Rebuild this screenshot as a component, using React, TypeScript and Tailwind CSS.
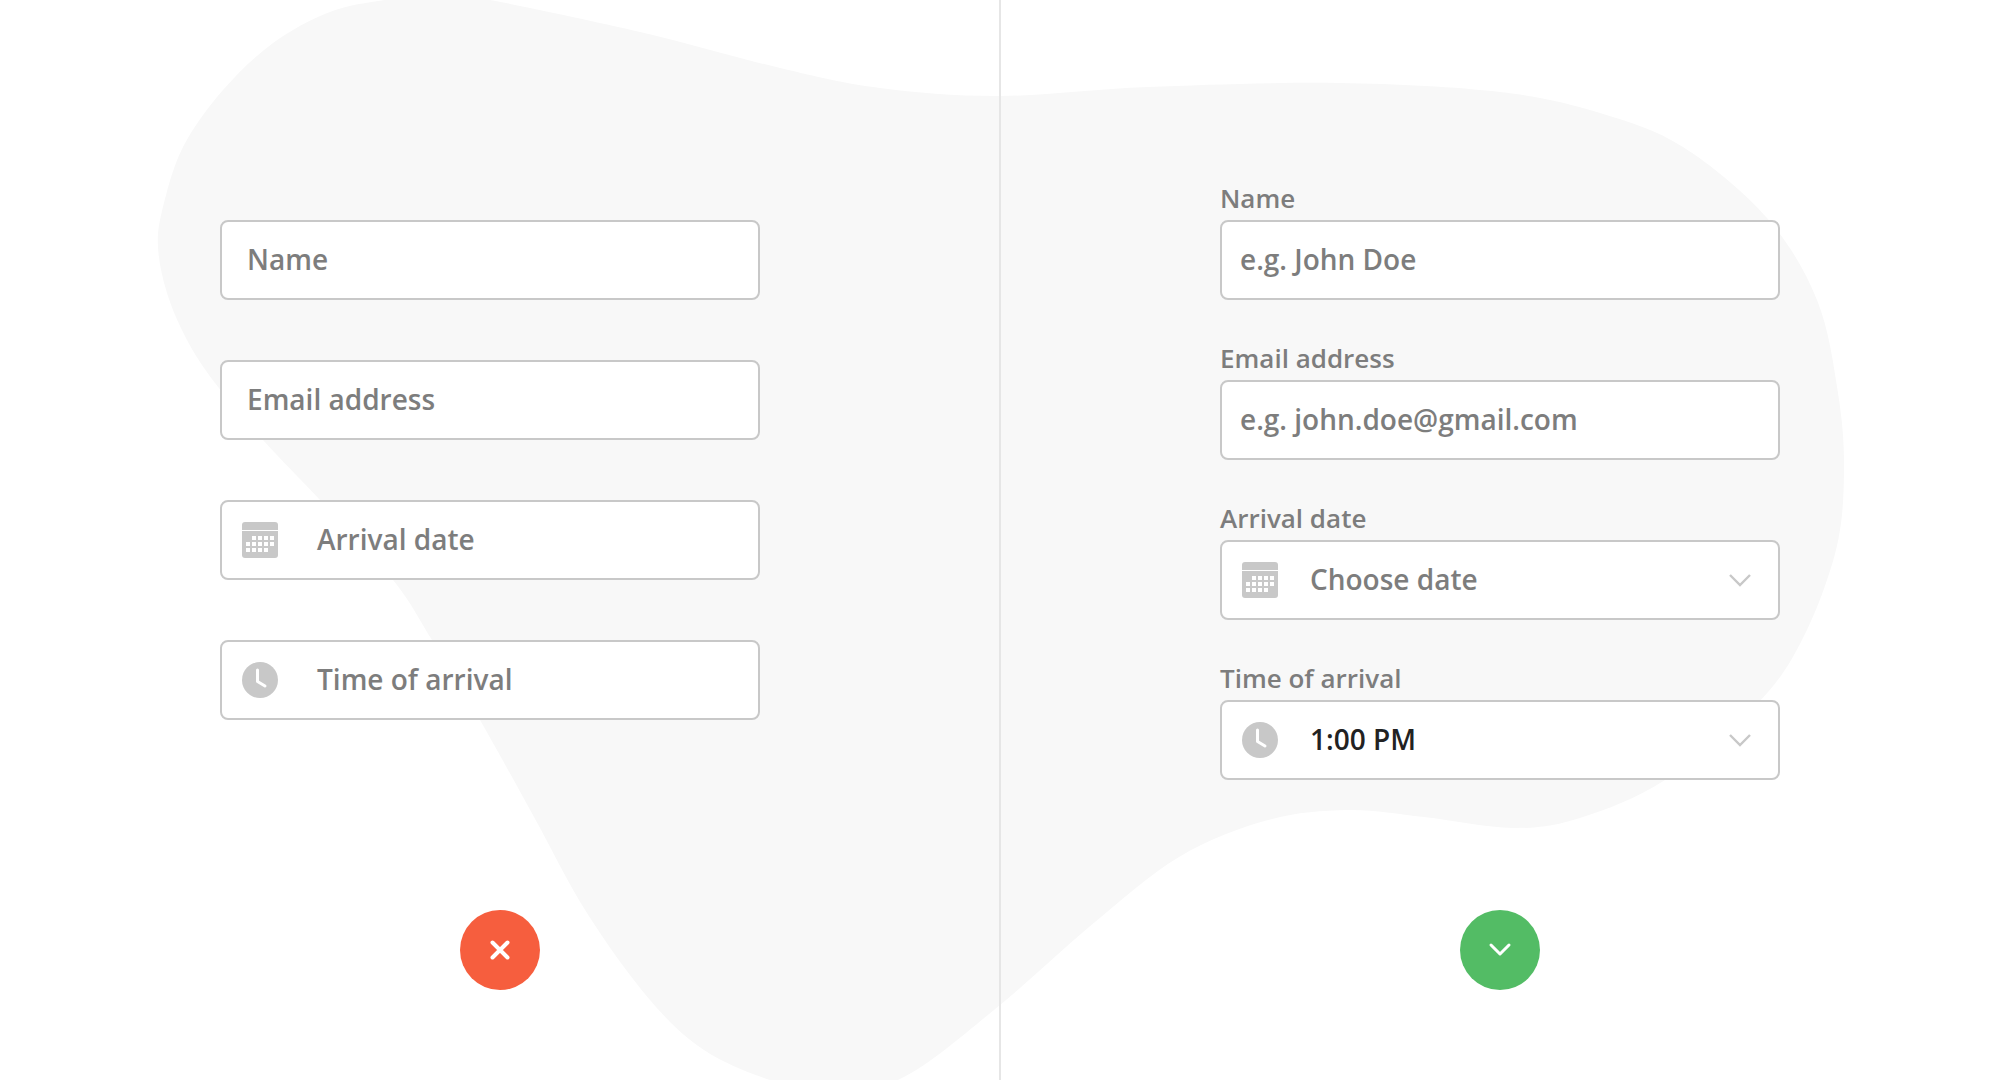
import React from "react";

const font = { fontFamily: '"Open Sans", "Noto Sans", sans-serif' };

const outline: [number, number][] = [
  [158, 247], [163, 207], [183, 147], [223, 90], [273, 43], [330, 12], [385, 0], [440, -5], [490, 0], [640, 32], [780, 68],
  [880, 88], [1000, 96], [1148, 87], [1339, 83], [1500, 92], [1600, 113], [1683, 147], [1767, 218], [1817, 300],
  [1838, 393], [1844, 470], [1836, 550], [1802, 640], [1756, 705], [1665, 780], [1580, 818], [1513, 828],
  [1424, 817], [1348, 810], [1268, 820], [1179, 857], [1089, 927], [1000, 1005], [904, 1077], [830, 1092],
  [770, 1080], [704, 1050], [650, 1000], [587, 913], [534, 817], [480, 720], [432, 640], [393, 580], [320, 500],
  [263, 440], [215, 383], [187, 340], [167, 293],
];

function smoothPath(p: [number, number][]) {
  const n = p.length;
  let d = `M${p[0][0]} ${p[0][1]}`;
  for (let i = 0; i < n; i++) {
    const a = p[(i - 1 + n) % n];
    const b = p[i];
    const c = p[(i + 1) % n];
    const e = p[(i + 2) % n];
    const c1x = b[0] + (c[0] - a[0]) / 6;
    const c1y = b[1] + (c[1] - a[1]) / 6;
    const c2x = c[0] - (e[0] - b[0]) / 6;
    const c2y = c[1] - (e[1] - b[1]) / 6;
    d += ` C${c1x.toFixed(1)} ${c1y.toFixed(1)} ${c2x.toFixed(1)} ${c2y.toFixed(1)} ${c[0]} ${c[1]}`;
  }
  return d + " Z";
}

function Blob() {
  return (
    <svg className="absolute inset-0" width="2000" height="1080" viewBox="0 0 2000 1080" fill="none">
      <path fill="#f8f8f8" d={smoothPath(outline)} />
    </svg>
  );
}

function CalendarIcon() {
  const cells: React.ReactNode[] = [];
  [14, 20, 26].forEach((y, r) =>
    [4, 10, 16, 22, 28].forEach((x, c) => {
      if ((r === 0 && c === 0) || (r === 2 && c === 4)) return;
      cells.push(<rect key={`${r}-${c}`} x={x} y={y} width="4" height="4" fill="#fff" />);
    })
  );
  return (
    <svg width="36" height="36" viewBox="0 0 36 36" className="shrink-0">
      <path fill="#c8c8c8" d="M3 0h30a3 3 0 0 1 3 3v5H0V3a3 3 0 0 1 3-3Z" />
      <path fill="#c8c8c8" d="M0 9h36v24a3 3 0 0 1-3 3H3a3 3 0 0 1-3-3Z" />
      {cells}
    </svg>
  );
}

function ClockIcon() {
  return (
    <svg width="36" height="36" viewBox="0 0 36 36" className="shrink-0">
      <circle cx="18" cy="18" r="18" fill="#c8c8c8" />
      <path d="M15.5 8v11.5l7.5 4.5" fill="none" stroke="#fff" strokeWidth="3" strokeLinecap="round" strokeLinejoin="round" />
    </svg>
  );
}

function Chevron() {
  return (
    <svg width="22" height="14" viewBox="0 0 22 14" className="shrink-0">
      <path d="M1 2l10 10L21 2" fill="none" stroke="#c8c8c8" strokeWidth="2.4" />
    </svg>
  );
}

function Field({
  text,
  icon,
  dark,
  chevron,
  pad,
  gap,
}: {
  text: string;
  icon?: React.ReactNode;
  dark?: boolean;
  chevron?: boolean;
  pad: string;
  gap?: string;
}) {
  return (
    <div className={`flex h-[80px] w-full items-center rounded-[8px] border-2 border-[#c8c8c8] bg-white ${pad}`}>
      {icon && <span className={`flex ${gap}`}>{icon}</span>}
      <span className={`flex-1 pb-[2px] text-[28px] font-semibold leading-none ${dark ? "text-[#222222]" : "text-[#7d7d7d]"}`}>{text}</span>
      {chevron && <span className="mr-[27px] flex"><Chevron /></span>}
    </div>
  );
}

function Labeled({ label, children }: { label: string; children: React.ReactNode }) {
  return (
    <div className="flex flex-col">
      <div className="mb-[4px] text-[26px] font-semibold leading-[36px] text-[#7d7d7d]">{label}</div>
      {children}
    </div>
  );
}

export default function App() {
  return (
    <div className="relative h-[1080px] w-[2000px] overflow-hidden bg-white" style={font}>
      <Blob />
      <div className="relative grid h-full grid-cols-[999px_1fr]">
        <section className="flex flex-col pt-[220px]">
          <div className="ml-[220px] flex w-[540px] flex-col gap-[60px]">
            <Field text="Name" pad="pl-[25px]" />
            <Field text="Email address" pad="pl-[25px]" />
            <Field text="Arrival date" icon={<CalendarIcon />} pad="pl-[20px]" gap="mr-[39px]" />
            <Field text="Time of arrival" icon={<ClockIcon />} pad="pl-[20px]" gap="mr-[39px]" />
          </div>
          <div className="ml-[460px] mt-[190px] flex h-[80px] w-[80px] items-center justify-center rounded-full bg-[#f65e3e]">
            <svg width="22" height="22" viewBox="0 0 22 22">
              <path d="M3.5 3.5l15 15M18.5 3.5l-15 15" fill="none" stroke="#fff" strokeWidth="4" strokeLinecap="round" />
            </svg>
          </div>
        </section>
        <section className="flex flex-col border-l-2 border-[#e6e6e6] pt-[180px]">
          <div className="ml-[219px] flex w-[560px] flex-col gap-[40px]">
            <Labeled label="Name"><Field text="e.g. John Doe" pad="pl-[18px]" /></Labeled>
            <Labeled label="Email address"><Field text="e.g. john.doe@gmail.com" pad="pl-[18px]" /></Labeled>
            <Labeled label="Arrival date"><Field text="Choose date" icon={<CalendarIcon />} chevron pad="pl-[20px]" gap="mr-[32px]" /></Labeled>
            <Labeled label="Time of arrival"><Field text="1:00 PM" dark icon={<ClockIcon />} chevron pad="pl-[20px]" gap="mr-[32px]" /></Labeled>
          </div>
          <div className="ml-[459px] mt-[130px] flex h-[80px] w-[80px] items-center justify-center rounded-full bg-[#53bc65]">
            <svg width="24" height="16" viewBox="0 0 24 16">
              <path d="M3 3l9 9 9-9" fill="none" stroke="#fff" strokeWidth="3" strokeLinecap="round" strokeLinejoin="round" />
            </svg>
          </div>
        </section>
      </div>
    </div>
  );
}
